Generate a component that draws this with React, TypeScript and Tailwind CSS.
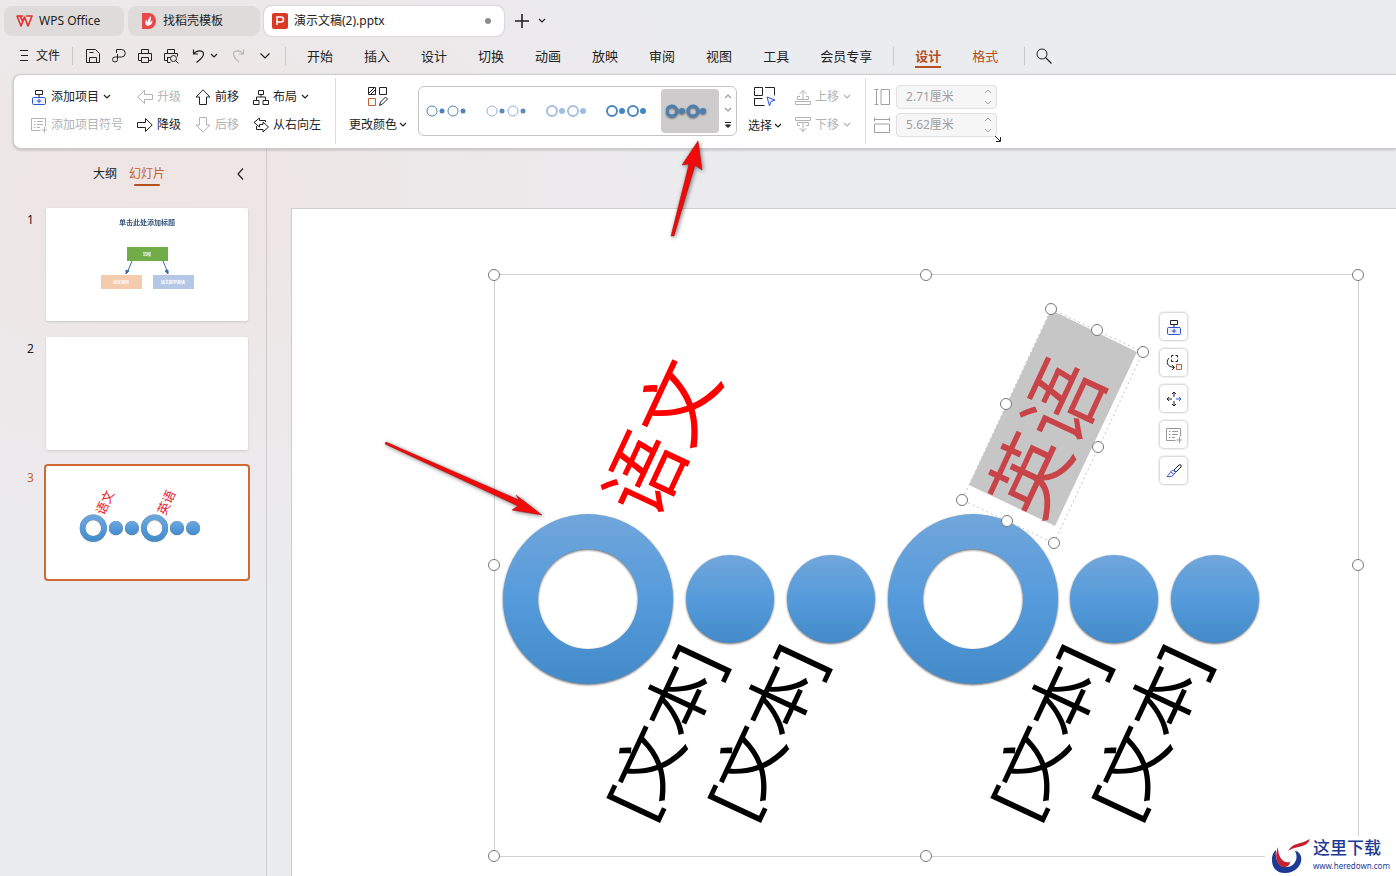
import type { ReactNode } from "react";

function Chevron({ className = "" }: { className?: string }) {
  return (
    <svg width="8" height="6" viewBox="0 0 8 6" fill="none" stroke="currentColor" strokeWidth="1.2" className={className}>
      <path d="M1 1l3 3 3-3" />
    </svg>
  );
}

function Icon({ children, size = 16, className = "" }: { children: ReactNode; size?: number; className?: string }) {
  return (
    <svg
      width={size}
      height={size}
      viewBox={`0 0 ${size} ${size}`}
      fill="none"
      stroke="currentColor"
      className={`shrink-0 ${className}`}
    >
      {children}
    </svg>
  );
}

const AddItem = () => (
  <>
    <path d="M4.500 1.500h7v4h-7zM8 5.500v3" />
    <rect x="1.500" y="8.500" width="13" height="7" rx="1" stroke="#2f54d0" fill="#eef2ff" />
    <path d="M8 9.800v4.400M5.800 12h4.400" stroke="#2f54d0" />
  </>
);

const AddBullet = () => (
  <path d="M9.500 13.500h-9v-12h14v8M3 4.500h1.500M6 4.500h6M3 7.500h1.500M6 7.500h6M3 10.500h1.500M6 10.500h3M13.500 10v6M10.500 13h6" />
);

const menus = ["开始", "插入", "设计", "切换", "动画", "放映", "审阅", "视图", "工具"];

function TitleTabs() {
  return (
    <div className="flex gap-1 pt-[6px] pl-1">
      <button className="flex h-[30px] w-[120px] items-center gap-[6px] rounded-lg bg-[#dedbda] pl-3">
        <svg width="17" height="12" viewBox="0 0 17 12" fill="none" stroke="#e0322c" strokeWidth="1.6" strokeLinejoin="round">
          <path d="M7 1H1l4 10 3.500-9 3.500 9 4-10h-6M4 1l3.200 6" />
        </svg>
        WPS Office
      </button>
      <button className="flex h-[30px] w-[132px] items-center gap-[6px] rounded-lg bg-[#dedbda] pl-[13px]">
        <svg width="16" height="16" viewBox="0 0 16 16">
          <path d="M1 0h7a7 8 0 0 1 0 16H1z" fill="#e9494b" />
          <path d="M6.500 13c-3-2-2.500-4.500-1-6.500.5 1.500 1 2 1.200 3C7 6.500 8 4.500 10 3c-.5 3 .5 3.500-1.500 6.500 1-.5 2-1.500 3-2 0 3-1.500 5-5 5.500z" fill="#fff" />
        </svg>
        找稻壳模板
      </button>
      <button className="flex h-[30px] w-[240px] items-center gap-[6px] rounded-lg bg-white pr-[13px] pl-2 shadow-[0_0_2px_#aaa]">
        <svg width="16" height="16" viewBox="0 0 16 16">
          <rect width="16" height="16" rx="2" fill="#d93a25" />
          <path d="M5 12V4h4a2 2 0 0 1 0 5H5" fill="none" stroke="#fff" strokeWidth="1.500" />
        </svg>
        演示文稿(2).pptx
        <span className="ml-auto size-[6px] rounded-full bg-[#8c8c8c]" />
      </button>
      <button aria-label="新建" className="ml-[6px] flex items-center">
        <Icon>
          <path d="M8 1v14M1 8h14" strokeWidth="1.600" />
        </Icon>
      </button>
      <button aria-label="标签列表" className="ml-1 flex items-center">
        <Chevron />
      </button>
    </div>
  );
}

function MenuBar() {
  return (
    <nav className="flex h-[38px] items-center pt-px">
      <button className="ml-5 flex w-[52px] items-center gap-2">
        <svg width="8" height="12" viewBox="0 0 8 12" stroke="currentColor">
          <path d="M0 .5h8M1 5.500h7M0 10.500h8" />
        </svg>
        文件
      </button>
      <span className="h-[18px] w-px bg-[#cbc8c8]" />
      <div className="ml-3 flex items-center gap-[10px]">
        <button aria-label="保存">
          <Icon>
            <path d="M1.500 14.500v-13h9l4 4v9zM4.500 14.500v-5h7v5M4.500 4.500h4" />
          </Icon>
        </button>
        <button aria-label="输出">
          <Icon>
            <path d="M5.500 5V1.500h5a3.500 3.500 0 0 1 0 7.500H4a2.500 2.500 0 1 0 2.500 2.500V6" />
          </Icon>
        </button>
        <button aria-label="打印">
          <Icon>
            <path d="M4.500 5.500v-4h7v4M4.500 12.500h-3v-7h13v7h-3M4.500 9.500h7v5h-7z" />
          </Icon>
        </button>
        <button aria-label="打印预览">
          <Icon>
            <path d="M4.500 5.500v-4h7v4M4.500 12.500h-3v-7h13v3M4.500 9.500h3M4.500 9v5.500h3M15.500 15.500l-3-3" />
            <circle cx="10.500" cy="10.500" r="3" />
          </Icon>
        </button>
      </div>
      <button aria-label="撤销" className="ml-3">
        <Icon>
          <path d="M2.500 1.500v4.500H7M2.500 6C5.500 2 12.500 1.500 12.500 6c0 3.500-4 6-7 8.500" strokeWidth="1.200" />
        </Icon>
      </button>
      <button aria-label="撤销列表" className="ml-[3px]">
        <Chevron />
      </button>
      <button aria-label="恢复" className="ml-[13px] text-[#b9b6b6]">
        <Icon>
          <path d="M12.500 1.500v4.500H8M12.500 6C9.500 2 2.500 1.500 2.500 6c0 3.500 3 5.500 5.500 8" strokeWidth="1.200" />
        </Icon>
      </button>
      <button aria-label="更多" className="ml-[13px]">
        <svg width="10" height="6" viewBox="0 0 10 6" fill="none" stroke="currentColor" strokeWidth="1.200">
          <path d="M.5.500l4.500 4.500L9.500.5" />
        </svg>
      </button>
      <span className="ml-[15px] h-[18px] w-px bg-[#cbc8c8]" />
      <div className="ml-[21px] flex items-center gap-[31px] text-[13px]">
        {menus.map((m) => (
          <button key={m}>{m}</button>
        ))}
        <button>会员专享</button>
      </div>
      <span className="ml-[21px] h-[18px] w-px bg-[#cbc8c8]" />
      <div className="ml-[21px] flex gap-[31px] text-[13px] text-[#b5511c]">
        <button className="mt-[2px] border-b-2 border-[#b5511c] font-bold">设计</button>
        <button>格式</button>
      </div>
      <span className="ml-[26px] h-[18px] w-px bg-[#c5c6c9]" />
      <button aria-label="搜索" className="ml-[11px]">
        <Icon>
          <circle cx="6" cy="6" r="5" />
          <path d="M9.500 9.500l6 6" strokeWidth="1.200" />
        </Icon>
      </button>
    </nav>
  );
}

function Cmd({ label, icon, off, menu }: { label: string; icon: ReactNode; off?: boolean; menu?: boolean }) {
  return (
    <button disabled={off} className={`flex h-7 items-center gap-1 whitespace-nowrap ${off ? "text-[#b3b3b3]" : ""}`}>
      <Icon>{icon}</Icon>
      {label}
      {menu && <Chevron />}
    </button>
  );
}

// gallery previews: ring, dot, ring, dot
const styles = [
  { name: "样式 1", ring: "#4f84b8", width: 1, dot: "#4f84b8" },
  { name: "样式 2", ring: "#8fb3d6", width: 1, dot: "#5a8cbc" },
  { name: "样式 3", ring: "#a6bfdd", width: 2, dot: "#a0bedd" },
  { name: "样式 4", ring: "#4b86be", width: 2, dot: "#3f87c7" },
  { name: "样式 5", ring: "#4a7fb2", width: 3, dot: "#4a7fb2" },
];

function Gallery() {
  return (
    <div className="ml-[11px] flex h-[50px] w-[319px] rounded-md border border-[#c4c4c4] bg-white">
      <div className="flex items-center gap-[2px] py-[2px] pl-[2px]">
        {styles.map((s, i) => (
          <button
            key={s.name}
            aria-label={s.name}
            className={`flex h-11 w-[58px] items-center justify-center rounded ${i === 4 ? "bg-[#cdcbcc]" : ""}`}
          >
            <svg
              width="48"
              height="16"
              viewBox="2 0 48 16"
              className={i === 4 ? "drop-shadow-[0_1px_1px_#0008]" : ""}
            >
              <g fill="none" stroke={s.ring} strokeWidth={s.width}>
                <circle cx="8" cy="8" r="5" />
                <circle cx="29" cy="8" r="5" />
              </g>
              <g fill={s.dot}>
                <circle cx="18" cy="8" r={i < 2 ? 2.5 : 3} />
                <circle cx="39" cy="8" r={i < 2 ? 2.5 : 3} />
              </g>
            </svg>
          </button>
        ))}
      </div>
      <div className="flex flex-1 flex-col items-center justify-between py-[6px] text-[#9a9a9a]">
        <button aria-label="上一行">
          <Chevron className="rotate-180" />
        </button>
        <button aria-label="下一行">
          <Chevron />
        </button>
        <button aria-label="更多样式" className="text-[#222]">
          <svg width="8" height="7" viewBox="0 0 8 7" fill="none" stroke="currentColor">
            <path d="M1 .5h6M1.500 3L4 5.500 6.500 3z" fill="currentColor" />
          </svg>
        </button>
      </div>
    </div>
  );
}

function SizeField({ label, value, icon }: { label: string; value: string; icon: ReactNode }) {
  return (
    <label className="flex items-center gap-[6px] text-[#a0a0a0]">
      <Icon>{icon}</Icon>
      <span className="flex h-6 w-[101px] items-center justify-between rounded border border-[#e0e0e0] bg-[#f6f6f6] pr-1 pl-[9px]">
        <input aria-label={label} disabled defaultValue={value} className="w-16 bg-transparent" />
        <svg width="8" height="16" viewBox="0 0 8 16" fill="none" stroke="currentColor">
          <path d="M1 4l3-3 3 3M1 12l3 3 3-3" />
        </svg>
      </span>
    </label>
  );
}

function Ribbon() {
  return (
    <section className="relative ml-[13px] flex h-[75px] items-center rounded-l-lg border border-r-0 border-[#cfcdcd] bg-white pb-[2px] pl-[17px] shadow-[0_1px_3px_#0003]">
      <div className="grid shrink-0 grid-cols-[106px_58px_58px_82px]">
        <Cmd label="添加项目" menu icon={<AddItem />} />
        <Cmd label="升级" off icon={<path d="M7.500 1.500L.8 8l6.700 6.500v-4h8v-5h-8z" />} />
        <Cmd label="前移" icon={<path d="M8 .8L1 8h3.500v7.500h7V8H15z" />} />
        <Cmd
          label="布局"
          menu
          icon={<path d="M5.500 1.500h5v4h-5zM8 5.500V8M3.500 11V8h9v3M.5 11.500h5.500v4H.5zM10 11.500h5.500v4H10z" />}
        />
        <Cmd label="添加项目符号" off icon={<AddBullet />} />
        <Cmd label="降级" icon={<path d="M8.500 1.500L15.200 8l-6.700 6.500v-4h-8v-5h8z" />} />
        <Cmd label="后移" off icon={<path d="M8 15.200L1 8h3.500V.5h7V8H15z" />} />
        <Cmd
          label="从右向左"
          icon={<path d="M12.500 5V3.500h-6V1L1 5.500 6.500 10V7.500h3.500V5l5.500 5-5.500 5v-2.500H3.500V9" />}
        />
      </div>
      <span className="h-[66px] w-px shrink-0 bg-[#dcdcdc]" />
      <button className="ml-[13px] flex flex-col items-center gap-2 whitespace-nowrap">
        <Icon size={20}>
          <path d="M.5.500h7v7h-7zM1 6l5-5M2.500 7.500l5-5M11.500.5h7v7h-7zM11.500 18.500l1-3.500 5-5 2 2-5 5z" />
          <path d="M.5 11.500h7v7h-7z" stroke="#c2602e" />
        </Icon>
        <span className="flex items-center gap-[2px]">
          更改颜色
          <Chevron />
        </span>
      </button>
      <Gallery />
      <button className="ml-[11px] flex flex-col items-center gap-2 whitespace-nowrap">
        <Icon size={22}>
          <path d="M.5 4.500v-3h8v8h-8v-5M11 1.500h9.500v8M.5 12v7.500h10M.5 12.500h8" />
          <path d="M13 11l8 3-4 1.500-1.500 4.500z" stroke="#2f54d0" fill="#eef2ff" />
        </Icon>
        <span className="flex items-center gap-[2px]">
          选择
          <Chevron />
        </span>
      </button>
      <div className="ml-[13px]">
        <Cmd label="上移" off menu icon={<path d="M8 10.500V1.500M4.500 5L8 1.500 11.500 5M5 7.500H2.500v3h11v-3H11M.5 12.500h15v3H.5z" />} />
        <Cmd label="下移" off menu icon={<path d="M.5.500h15v3H.5zM5 8.500H2.500v-3h11v3H11M8 5.500v9M4.500 11L8 14.500 11.500 11" />} />
      </div>
      <span className="ml-[14px] h-[66px] w-px bg-[#dcdcdc]" />
      <div className="ml-2 flex flex-col gap-1">
        <SizeField label="高度" value="2.71厘米" icon={<path d="M.5.500h4M2.500.5v15M.5 15.500h4M7 .5h8.500v15H7z" />} />
        <SizeField label="宽度" value="5.62厘米" icon={<path d="M.5.500v4M.5 2.500h15M15.500.5v4M.5 7h15v8.500H.5z" />} />
      </div>
      <button aria-label="更多设置" className="-ml-[2px] self-end">
        <svg width="6" height="6" viewBox="0 0 6 6" fill="none" stroke="currentColor" className="mb-1">
          <path d="M0 0l5 5M5.500 1v4.500H1" />
        </svg>
      </button>
    </section>
  );
}

const rings = [297, 682];
const dots = [439, 540, 823, 924];

function Bubbles() {
  return (
    <g fill="url(#bubble-blue)" className="drop-shadow-[0_1px_1px_#0009]">
      {rings.map((x) => (
        <path
          key={x}
          fillRule="evenodd"
          d={`M${x - 85} 390a85 85 0 1 0 170 0a85 85 0 1 0 -170 0M${x - 50} 390a50 50 0 1 0 100 0a50 50 0 1 0 -100 0`}
        />
      ))}
      {dots.map((x) => (
        <circle key={x} cx={x} cy="390" r="44" />
      ))}
    </g>
  );
}

function Thumb({ n, current, children }: { n: number; current?: boolean; children?: ReactNode }) {
  return (
    <li className="flex">
      <span className={`w-[44px] pt-1 pl-[27px] ${current ? "text-[#c2602e]" : ""}`}>{n}</span>
      <button
        aria-label={`幻灯片 ${n}`}
        className={`h-[117px] w-[206px] overflow-hidden rounded border-2 bg-white bg-clip-padding ${
          current ? "border-[#d06a31]" : "border-transparent drop-shadow-[0_1px_1px_#0002]"
        }`}
      >
        {children}
      </button>
    </li>
  );
}

function Sidebar() {
  return (
    <aside className="w-[267px] shrink-0 border-r border-[#cfcacc]">
      <div className="flex h-[57px] items-start pt-[15px] pl-[93px]">
        <button>大纲</button>
        <button className="ml-3 flex flex-col items-center text-[#c2602e]">
          幻灯片
          <span className="h-[2px] w-[26px] rounded bg-[#b5511c]" />
        </button>
        <button aria-label="收起" className="mt-1 ml-[72px]">
          <svg width="7" height="12" viewBox="0 0 7 12" fill="none" stroke="currentColor" strokeWidth="1.200">
            <path d="M6 .5L1 6l5 5.500" />
          </svg>
        </button>
      </div>
      <ol className="flex flex-col gap-3">
        <Thumb n={1}>
          <svg width="202" height="113" viewBox="0 0 202 113" className="font-bold" textAnchor="middle">
            <text x="101" y="17" fontSize="7" fill="#34567c">单击此处添加标题</text>
            <path d="M81 39h41v14H81z" fill="#70ad47" />
            <path d="M55 67h41v14H55z" fill="#f5cbae" />
            <path d="M107 67h41v14h-41z" fill="#b4c7e7" />
            <path d="M86 53l-5 12M117 53l5 12" stroke="#3f6ea5" />
            <path d="M80 66l0-4 3 1zM122 66l0-4-3 1z" fill="#3f6ea5" stroke="#3f6ea5" />
            <g fill="#fff" fontSize="4">
              <text x="101" y="48">流程</text>
              <text x="75" y="76">语文项目</text>
              <text x="127" y="76">语文数学英语</text>
            </g>
          </svg>
        </Thumb>
        <Thumb n={2} />
        <Thumb n={3} current>
          <svg width="202" height="113" viewBox="0 0 1269 710" textAnchor="middle">
            <Bubbles />
            <g fill="#e8202a" fontSize="80">
              <text transform="translate(370 229) rotate(-65)" y="30">语文</text>
              <text transform="translate(755 229) rotate(-65)" y="30">英语</text>
            </g>
          </svg>
        </Thumb>
      </ol>
    </aside>
  );
}

const frameHandles = [[203, 66], [635, 66], [1067, 66], [203, 356], [1067, 356], [203, 647], [635, 647]];
const textHandles = [[760, 100], [806, 121], [852, 143], [807, 238], [763, 334], [716, 312], [671, 291], [715, 195]];

const tools = [
  { name: "添加项目", icon: <AddItem /> },
  {
    name: "更改位置",
    icon: (
      <>
        <path d="M7.500.5h-2v2M5.500 4.500v2h2M9.500 6.500h2v-2M11.500 2.500v-2h-2" />
        <path d="M3 3C-.5 7 1 12 8.500 12.500M6 10l2.500 2.500L6 15" />
        <path d="M10.500 9.500h5v5h-5z" stroke="#c2602e" />
      </>
    ),
  },
  {
    name: "移动",
    icon: (
      <>
        <path d="M8 6V1M6 3l2-2 2 2M8 10v5M6 13l2 2 2-2M6 8H1M3 6L1 8l2 2" />
        <path d="M10 8h5M13 6l2 2-2 2" stroke="#2f54d0" />
      </>
    ),
  },
  { name: "添加项目符号", off: true, icon: <AddBullet /> },
  {
    name: "形状样式",
    icon: (
      <>
        <path d="M8 7l5-5c1.500-1 3 .5 2 2l-5 5z" />
        <path d="M8 7l2 2M6.500 7.500C5 7.500 4.500 10 1 13.500c3 .5 6 0 7-2.500l1.500-1.500-2-2zM5 9l3 2.500" stroke="#2f54d0" />
      </>
    ),
  },
];

function Slide() {
  return (
    <div className="relative h-full overflow-hidden border-t border-l border-[#cbcbd0] bg-white">
      <svg width="1105" height="666" viewBox="1 0 1105 666" textAnchor="middle" className="block">
        <defs>
          <linearGradient id="bubble-blue" x1="0" y1="0" x2="0" y2="1">
            <stop offset="0" stopColor="#71a6db" />
            <stop offset=".5" stopColor="#559bdb" />
            <stop offset="1" stopColor="#438ac9" />
          </linearGradient>
        </defs>
        <rect x="203.500" y="65.500" width="864" height="582" fill="none" stroke="#d0d0d0" />
        <Bubbles />
        <g fill="#fe0000" fontSize="80">
          <text transform="translate(370 229) rotate(-65)" y="30">语文</text>
          <path d="M760 101l86 42-82 174-86-41z" fill="#c6c6c6" />
          <text transform="translate(755 229) rotate(-65)" y="30" fill="#c84448">英语</text>
        </g>
        <path d="M760 100l92 43-89 191-92-43z" fill="none" stroke="#c4c4c4" strokeDasharray="2 3" />
        <g fontSize="68" fill="#000">
          {[379, 480, 763, 864].map((x) => (
            <text key={x} transform={`translate(${x} 525) rotate(-65)`} y="18">[文本]</text>
          ))}
        </g>
        <g fill="#fff" stroke="#777">
          {[...frameHandles, ...textHandles].map(([x, y]) => (
            <circle key={`${x}-${y}`} cx={x} cy={y} r="5.500" />
          ))}
        </g>
      </svg>
      <div className="absolute top-[104px] left-[868px] flex flex-col gap-[9px]">
        {tools.map((t) => (
          <button
            key={t.name}
            aria-label={t.name}
            className={`flex h-[27px] w-[27px] items-center justify-center rounded bg-white shadow-[0_0_3px_#0006] ${
              t.off ? "text-[#999]" : ""
            }`}
          >
            <Icon>{t.icon}</Icon>
          </button>
        ))}
      </div>
    </div>
  );
}

function Watermark() {
  return (
    <div className="absolute right-0 bottom-0 flex h-[40px] w-[131px] items-center gap-[2px] bg-white pl-1 text-[#1d3a94]">
      <svg width="42" height="38" viewBox="0 0 42 38" className="shrink-0">
        <path d="M7 13C1 17 0 36 16 36c14 0 20-14 14-20-2-2-3-2-4-2 4 7 0 16-9 16C9 30 6 22 7 13z" fill="#1d3a94" />
        <path d="M9 10c-4 10-1 20 7 20 3 0 5-3 5-5-7 2-12-5-12-15zM19 14c5-9 12-6 22-12-4 10-13 6-22 12z" fill="#c8202f" />
      </svg>
      <div className="flex flex-col whitespace-nowrap">
        <span className="text-[17px] leading-5 font-medium">这里下载</span>
        <a href="#" className="text-[8px] leading-4">www.heredown.com</a>
      </div>
    </div>
  );
}

export default function App() {
  return (
    <div className="relative flex min-h-screen flex-col overflow-hidden bg-[#ebecf0] bg-[radial-gradient(ellipse_600px_400px_at_160px_200px,#eee4e3,#ebecf0)] font-['Noto_Sans','Noto_Sans_CJK_SC',sans-serif] text-[12px] leading-5 text-[#222]">
      <TitleTabs />
      <MenuBar />
      <Ribbon />
      <main className="flex flex-1">
        <Sidebar />
        <div className="min-w-0 flex-1 pt-[59px] pl-6">
          <Slide />
        </div>
      </main>
      <Watermark />
      <svg width="600" height="520" viewBox="0 0 600 520" className="pointer-events-none absolute top-0 left-[200px] drop-shadow-[1px_1px_2px_#0008]">
        <g stroke="#a00d0d" strokeWidth=".5" fill="#f00a0a">
          <path d="M186 442l133 58-3-5 26 20-30-5 6-4-133-62z" />
          <path d="M471 236l18-72-7 1 16-24 4 29-7-5-21 71z" />
        </g>
      </svg>
    </div>
  );
}
